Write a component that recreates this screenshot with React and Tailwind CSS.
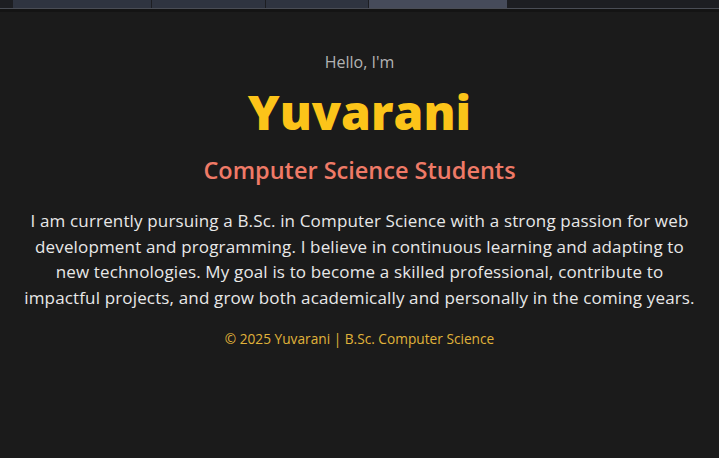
import React from "react";

const tabs = [
  { w: "w-[138px]", active: false },
  { w: "w-[113px]", active: false },
  { w: "w-[102px]", active: false },
  { w: "w-[138px]", active: true },
];

function TabStrip() {
  return (
    <div className="flex h-2 bg-[#1d1e22]">
      <div className="w-[13px]" />
      {tabs.map((t, i) => (
        <div
          key={i}
          className={`${t.w} mr-px ${t.active ? "bg-[#464b5a]" : "bg-[#2f3440]"}`}
        />
      ))}
    </div>
  );
}

function App() {
  return (
    <div
      className="min-h-screen bg-[#1b1b1b] text-center"
      style={{ fontFamily: "'Open Sans', 'DejaVu Sans', sans-serif" }}
    >
      <TabStrip />
      <div className="h-px bg-[#4a4d55]" />
      <div className="h-[3px] bg-[#141414]" />

      <main className="flex flex-col items-center px-5 pt-[38px]">
        <p className="text-[16px] leading-6 text-[#b3b3b3]">Hello, I'm</p>
        <h1 className="mt-[10px] text-[48px] font-extrabold leading-[56px] text-[#fcc419]">
          Yuvarani
        </h1>
        <h2 className="mt-[16px] text-[23.5px] font-semibold leading-7 text-[#ef7a67]">
          Computer Science Students
        </h2>
        <p className="mt-[24px] max-w-[680px] text-[17px] tracking-[0.15px] leading-[25.7px] text-[#e8e8e8]">
          I am currently pursuing a B.Sc. in Computer Science with a strong passion for web
          development and programming. I believe in continuous learning and adapting to new
          technologies. My goal is to become a skilled professional, contribute to impactful
          projects, and grow both academically and personally in the coming years.
        </p>
        <footer className="mt-[18px] text-[13.7px] leading-5 text-[#e0b33a]">
          © 2025 Yuvarani | B.Sc. Computer Science
        </footer>
      </main>
    </div>
  );
}

export default App;
